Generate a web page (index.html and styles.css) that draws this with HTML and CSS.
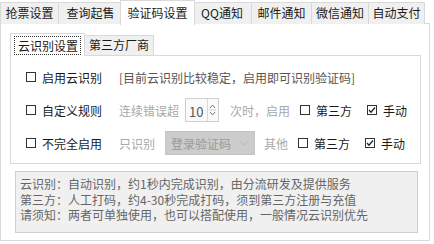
FILE: index.html
```html
<!DOCTYPE html>
<html lang="zh">
<head>
<meta charset="utf-8">
<link rel="stylesheet" href="styles.css">
</head>
<body>
<div class="window">
  <div class="tabs">
    <div class="tab t1">抢票设置</div>
    <div class="tab t2">查询起售</div>
    <div class="tab active t3">验证码设置</div>
    <div class="tab t4">QQ通知</div>
    <div class="tab t5">邮件通知</div>
    <div class="tab t6">微信通知</div>
    <div class="tab t7">自动支付</div>
  </div>
  <div class="panel">
    <div class="subtabs">
      <div class="subtab active"><span class="focus">云识别设置</span></div>
      <div class="subtab">第三方厂商</div>
    </div>
    <div class="subpanel">
      <div class="row r1">
        <label class="check first"><span class="box"></span><span>启用云识别</span></label>
        <span class="note">[目前云识别比较稳定，启用即可识别验证码]</span>
      </div>
      <div class="row r2">
        <label class="check first"><span class="box"></span><span>自定义规则</span></label>
        <span class="dim">连续错误超</span>
        <div class="spin">
          <span class="spin-val">10</span>
          <span class="spin-btns">
            <svg width="7" height="16" viewBox="0 0 7 16"><path d="M1 6 L3.5 3 L6 6" fill="none" stroke="#777" stroke-width="1"/><path d="M0 8h7" stroke="#ccc"/><path d="M1 10 L3.5 13 L6 10" fill="none" stroke="#777" stroke-width="1"/></svg>
          </span>
        </div>
        <span class="dim after-spin">次时，启用</span>
        <label class="check opt"><span class="box"></span><span>第三方</span></label>
        <label class="check opt"><span class="box on"><svg width="8" height="8" viewBox="0 0 8 8"><path d="M1 4 L3 6.2 L7 1.5" fill="none" stroke="#222" stroke-width="1.3"/></svg></span><span>手动</span></label>
      </div>
      <div class="row r3">
        <label class="check first"><span class="box"></span><span>不完全启用</span></label>
        <span class="dim">只识别</span>
        <div class="combo">
          <span>登录验证码</span>
          <svg width="9" height="6" viewBox="0 0 9 6"><path d="M0.5 1 L4.5 5 L8.5 1" fill="none" stroke="#b0b0b0" stroke-width="0.8"/></svg>
        </div>
        <span class="dim after-combo">其他</span>
        <label class="check opt"><span class="box"></span><span>第三方</span></label>
        <label class="check opt"><span class="box on"><svg width="8" height="8" viewBox="0 0 8 8"><path d="M1 4 L3 6.2 L7 1.5" fill="none" stroke="#222" stroke-width="1.3"/></svg></span><span>手动</span></label>
      </div>
    </div>
    <div class="info">
      <p>云识别：自动识别，约1秒内完成识别，由分流研发及提供服务</p>
      <p>第三方：人工打码，约4-30秒完成打码，须到第三方注册与充值</p>
      <p>请须知：两者可单独使用，也可以搭配使用，一般情况云识别优先</p>
    </div>
  </div>
</div>
</body>
</html>
```

FILE: styles.css
```css
* { box-sizing: border-box; }
body {
  margin: 0;
  background: #fff;
  font-family: "Noto Sans CJK SC", "Microsoft YaHei", sans-serif;
  font-size: 12px;
  color: #1a1a1a;
}
.window { width: 434px; height: 244px; }

.tabs {
  display: flex;
  align-items: flex-end;
  height: 24px;
  position: relative;
  z-index: 1;
}
.tab {
  height: 22px;
  line-height: 20px;
  text-align: center;
  background: #f0f0f0;
  border: 1px solid #d9d9d9;
  border-bottom: none;
  margin-right: -1px;
  white-space: nowrap;
}
.tab.active {
  height: 25px;
  line-height: 23px;
  background: #fff;
  margin: 0 -3px -1px -2px;
  position: relative;
  z-index: 2;
}
.t1 { width: 59px; }
.t2 { width: 65px; }
.t3 { width: 75px; }
.t4 { width: 60px; }
.t5 { width: 61px; }
.t6 { width: 58px; }
.t7 { width: 57px; }

.panel {
  width: 430px;
  height: 218px;
  border: 1px solid #d9d9d9;
  margin-top: -1px;
  padding: 8px 0 0 9px;
}

.subtabs {
  display: flex;
  align-items: flex-end;
  height: 23px;
  position: relative;
  z-index: 1;
}
.subtab {
  height: 20px;
  line-height: 18px;
  padding: 0 4px;
  background: #f0f0f0;
  border: 1px solid #d9d9d9;
  border-bottom: none;
  white-space: nowrap;
}
.subtab.active {
  height: 23px;
  width: 75px;
  background: #fff;
  margin-bottom: -1px;
  margin-right: -1px;
  padding: 2px 3px 2px 3px;
  line-height: 17px;
}
.focus {
  display: block;
  border: 1px dotted #333;
  padding: 0 3px;
  height: 19px;
  line-height: 17px;
}

.subpanel {
  width: 411px;
  height: 109px;
  border: 1px solid #d9d9d9;
  padding: 10px 0 0 15px;
}
.row {
  display: flex;
  align-items: center;
}
.r1 { height: 22px; }
.r2 { height: 24px; margin-top: 10px; }
.r3 { height: 24px; margin-top: 9px; }

.check {
  display: flex;
  align-items: center;
  white-space: nowrap;
}
.check.first { width: 93px; }
.box {
  width: 10px;
  height: 10px;
  border: 1px solid #333;
  background: #fff;
  margin-right: 6px;
  display: flex;
  align-items: center;
  justify-content: center;
}
.note { color: #555; }
.dim { color: #a8a8a8; white-space: nowrap; }

.spin {
  display: flex;
  align-items: center;
  width: 34px;
  height: 24px;
  margin-left: 6px;
  border: 1px solid #cfcfcf;
  background: #fafafa;
  padding-left: 3px;
  color: #555;
  font-size: 13px;
}
.spin-val { flex: 1; padding-top: 3px; }
.spin-btns {
  width: 10px;
  height: 22px;
  display: flex;
  align-items: center;
  justify-content: center;
  border-left: 1px solid #d9d9d9;
  margin-right: 1px;
}
.after-spin { margin-left: 11px; }
.opt { margin-left: 10px; }
.opt + .opt { margin-left: 15px; }

.combo {
  display: flex;
  align-items: center;
  justify-content: space-between;
  width: 90px;
  height: 24px;
  margin-left: 10px;
  padding: 0 5px 0 5px;
  background: #cccccc;
  border: 1px solid #c4c4c4;
  color: #9a9a9a;
}
.after-combo { margin-left: 9px; }

.info {
  width: 403px;
  height: 62px;
  margin: 7px 0 0 5px;
  border: 1px solid #cfcfcf;
  background: #f0f0f0;
  padding: 4px 0 0 4px;
  color: #666;
}
.info p { margin: 0; line-height: 15.5px; white-space: nowrap; }
```
